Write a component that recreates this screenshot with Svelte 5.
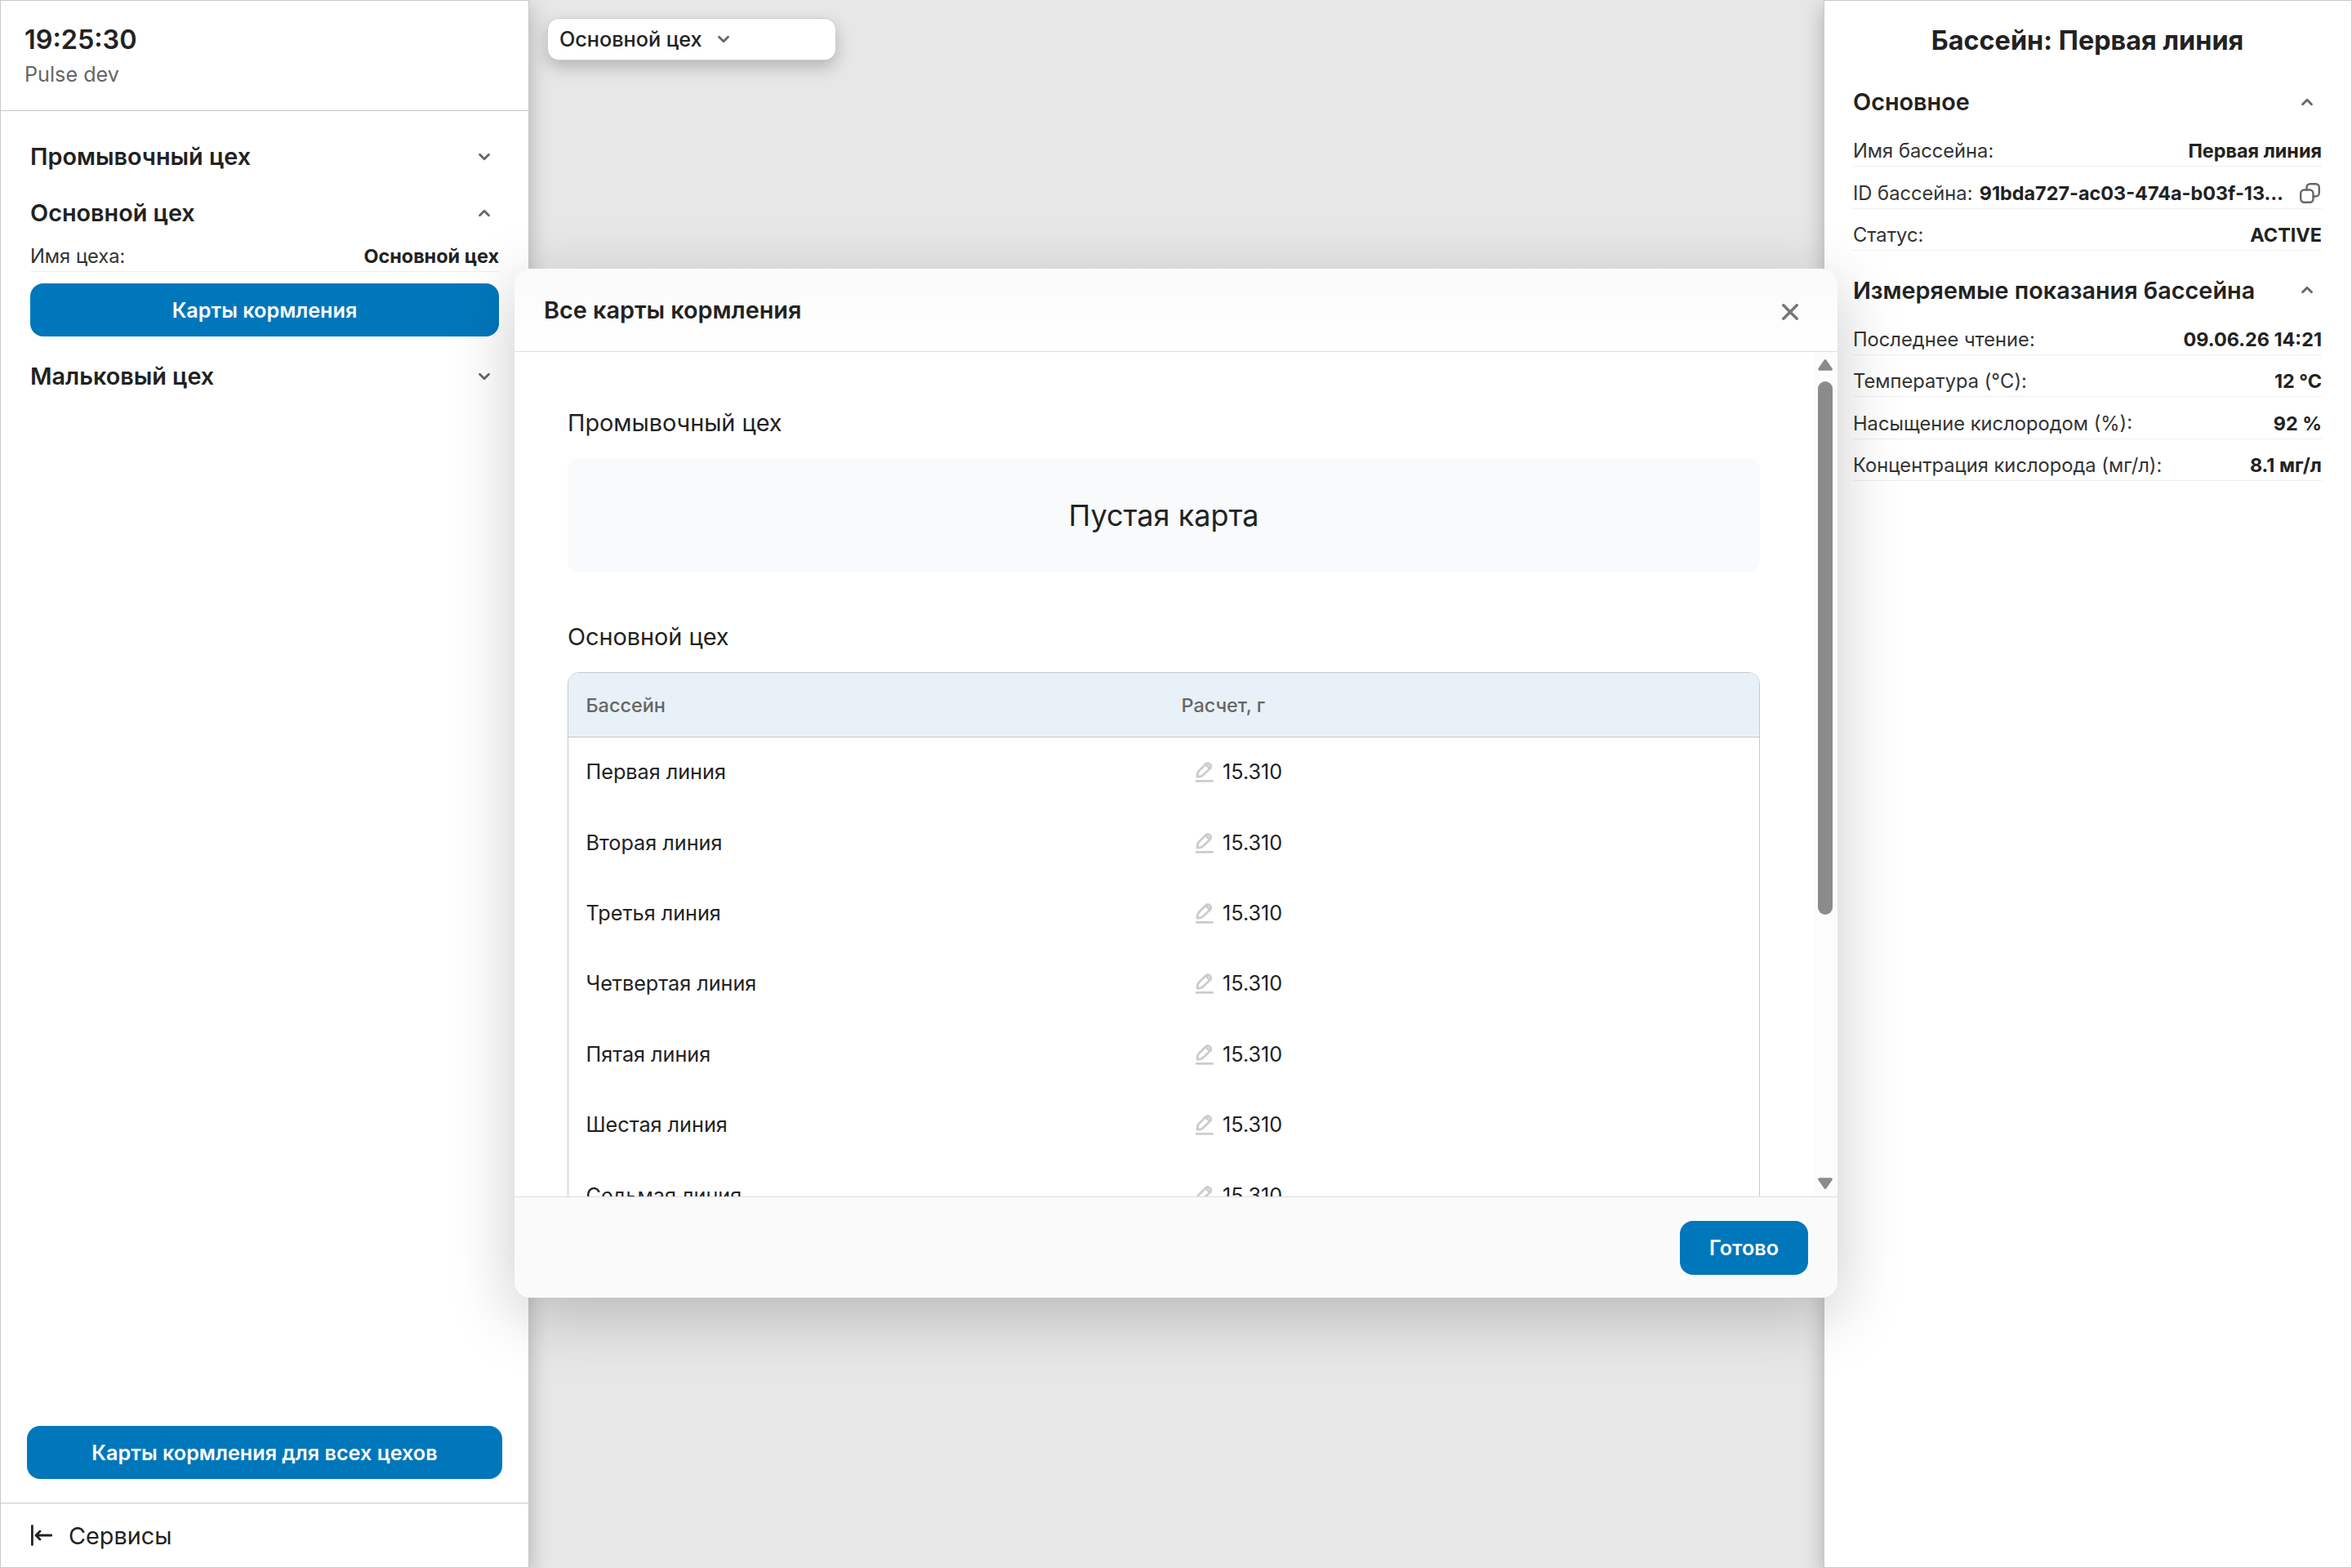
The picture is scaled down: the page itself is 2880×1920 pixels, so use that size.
<script lang="ts">
  type Pair = { label: string; value: string; copy?: boolean };

  const main: Pair[] = [
    { label: 'Имя бассейна:', value: 'Первая линия' },
    { label: 'ID бассейна:', value: '91bda727-ac03-474a-b03f-13…', copy: true },
    { label: 'Статус:', value: 'ACTIVE' },
  ];

  const readings: Pair[] = [
    { label: 'Последнее чтение:', value: '09.06.26 14:21' },
    { label: 'Температура (°C):', value: '12 °C' },
    { label: 'Насыщение кислородом (%):', value: '92 %' },
    { label: 'Концентрация кислорода (мг/л):', value: '8.1 мг/л' },
  ];

  const pools = ['Первая', 'Вторая', 'Третья', 'Четвертая', 'Пятая', 'Шестая', 'Седьмая'].map(
    (name) => ({ name: `${name} линия`, amount: '15.310' }),
  );
</script>

{#snippet chevron(up: boolean)}
  <svg class="chevron" class:up viewBox="0 0 16 10" width="16" height="10" aria-hidden="true">
    <path d="M2.5 2.2 8 7.7l5.5-5.5" />
  </svg>
{/snippet}

{#snippet group(title: string, open: boolean)}
  <button class="group" aria-expanded={open}>
    <span>{title}</span>
    {@render chevron(open)}
  </button>
{/snippet}

{#snippet pair(item: Pair)}
  <div class="pair">
    <span class="label">{item.label}</span>
    <span class="value">{item.value}</span>
    {#if item.copy}
      <button class="copy" aria-label="Скопировать">
        <svg viewBox="0 0 25 25" width="25" height="25" aria-hidden="true">
          <rect x="1.2" y="8.5" width="15.3" height="15.3" rx="4.2" />
          <path d="M8.5 8.5V5.4a4.2 4.2 0 0 1 4.2-4.2h6.9a4.2 4.2 0 0 1 4.2 4.2v6.9a4.2 4.2 0 0 1-4.2 4.2h-3.1" />
        </svg>
      </button>
    {/if}
  </div>
{/snippet}

<div class="app">
  <aside class="side left">
    <header class="clock">
      <div class="time">19:25:30</div>
      <div class="stand">Pulse dev</div>
    </header>
    <div class="shops">
      {@render group('Промывочный цех', false)}
      {@render group('Основной цех', true)}
      {@render pair({ label: 'Имя цеха:', value: 'Основной цех' })}
      <button class="primary wide">Карты кормления</button>
      {@render group('Мальковый цех', false)}
    </div>
    <button class="primary all">Карты кормления для всех цехов</button>
    <footer class="services">
      <svg viewBox="0 0 26 26" width="26" height="26" aria-hidden="true">
        <path d="M1.4 1.4v23.2M25 13H7M11 8l-5 5 5 5" />
      </svg>
      <span>Сервисы</span>
    </footer>
  </aside>

  <main class="stage">
    <button class="select">
      <span>Основной цех</span>
      {@render chevron(false)}
    </button>
  </main>

  <aside class="side right">
    <h1>Бассейн: Первая линия</h1>
    {@render group('Основное', true)}
    {#each main as item}
      {@render pair(item)}
    {/each}
    {@render group('Измеряемые показания бассейна', true)}
    {#each readings as item}
      {@render pair(item)}
    {/each}
  </aside>

  <div class="overlay">
    <div class="modal" role="dialog" aria-label="Все карты кормления">
      <header class="modal-head">
        <h2>Все карты кормления</h2>
        <button class="close" aria-label="Закрыть">
          <svg viewBox="0 0 20 20" width="20" height="20" aria-hidden="true">
            <path d="M1.8 1.8l16.4 16.4M18.2 1.8 1.8 18.2" />
          </svg>
        </button>
      </header>
      <div class="modal-body">
        <div class="cards">
          <h3>Промывочный цех</h3>
          <div class="empty">Пустая карта</div>
          <h3>Основной цех</h3>
          <div class="table">
            <div class="tr th">
              <span>Бассейн</span>
              <span>Расчет, г</span>
            </div>
            {#each pools as pool}
              <div class="tr">
                <span>{pool.name}</span>
                <span class="amount">
                  <svg viewBox="0 0 22 26" width="22" height="26" aria-hidden="true">
                    <path d="M2 19.2c0-4 .6-5.7 2-7.1l8.5-8.5c3-3 8.5 2 5.4 5.2l-9 8.5c-1.6 1.5-3.3 1.9-6.9 1.9zM13 4.5l4.2 4.3" />
                    <path d="M1.2 24.4h19.6" />
                  </svg>
                  {pool.amount}
                </span>
              </div>
            {/each}
          </div>
        </div>
        <div class="scrollbar">
          <svg viewBox="0 0 18 14" width="18" height="14" aria-hidden="true">
            <path d="M9 2l7 10H2z" />
          </svg>
          <div class="track"><div class="thumb"></div></div>
          <svg viewBox="0 0 18 14" width="18" height="14" aria-hidden="true">
            <path d="M9 12 2 2h14z" />
          </svg>
        </div>
      </div>
      <footer class="modal-foot">
        <button class="primary done">Готово</button>
      </footer>
    </div>
  </div>
</div>

<style>
  :global(body) {
    background: #e7e7e7;
  }

  .app {
    position: relative;
    display: flex;
    width: 2880px;
    height: 1920px;
    overflow: hidden;
    font-family: Inter, sans-serif;
    font-size: 25.2px;
    color: #222;
    background: #e7e7e7;
  }

  .app * {
    box-sizing: border-box;
  }

  button {
    margin: 0;
    padding: 0;
    border: none;
    background: none;
    font: inherit;
    color: inherit;
    cursor: pointer;
  }

  h1,
  h2,
  h3 {
    margin: 0;
  }

  svg {
    flex: none;
    display: block;
    fill: none;
    stroke: currentColor;
    stroke-linecap: round;
    stroke-linejoin: round;
  }

  .side {
    flex: none;
    display: flex;
    flex-direction: column;
    width: 648px;
    border: 1px solid #c8c8c8;
    background: #fff;
    box-shadow: 0 8px 24px rgba(0, 0, 0, 0.25);
  }

  .clock {
    height: 135px;
    padding: 28px 29px 0;
    border-bottom: 1px solid #c8c8c8;
  }
  .time {
    font-size: 32.4px;
    line-height: 40px;
    font-weight: 600;
  }
  .stand {
    margin-top: 6px;
    line-height: 32px;
    color: #666;
  }

  .shops {
    flex: 1;
    display: flex;
    flex-direction: column;
    padding: 21px 36px 0;
  }

  .group {
    flex: none;
    display: flex;
    align-items: center;
    justify-content: space-between;
    height: 69px;
    padding-right: 10px;
    font-size: 28.8px;
    font-weight: 600;
    text-align: left;
  }

  .chevron {
    color: #666;
    stroke-width: 2.8;
  }
  .chevron.up {
    transform: rotate(180deg);
  }

  .pair {
    flex: none;
    display: flex;
    align-items: center;
    height: 38px;
    border-bottom: 1px solid #efefef;
    font-size: 23.7px;
    white-space: nowrap;
  }
  .label {
    color: #333;
  }
  .value {
    flex: 1;
    margin-left: 6px;
    font-size: 23.4px;
    font-weight: 700;
    text-align: right;
  }
  .copy {
    margin-left: 20px;
    padding-right: 2px;
    color: #666;
  }
  .copy svg {
    stroke-width: 2.4;
  }

  .primary {
    border-radius: 16px;
    background: #0077bb;
    color: #fff;
    font-weight: 600;
  }
  .wide {
    flex: none;
    height: 65px;
    margin: 14px 0;
  }
  .all {
    flex: none;
    height: 65px;
    margin: 0 32px 29px;
  }

  .services {
    display: flex;
    align-items: center;
    gap: 20px;
    height: 79px;
    padding-left: 37px;
    border-top: 1px solid #c8c8c8;
    font-size: 28.8px;
  }
  .services svg {
    stroke-width: 2.8;
  }

  .stage {
    flex: 1;
    padding: 22px;
  }
  .select {
    display: flex;
    align-items: center;
    gap: 18px;
    width: 354px;
    height: 52px;
    padding: 0 14px;
    border: 1px solid #ccc;
    border-radius: 14px;
    background: #fff;
    font-weight: 450;
    box-shadow: 0 8px 20px rgba(0, 0, 0, 0.22);
  }

  .right {
    width: 647px;
    padding: 27px 36px 0 35px;
  }
  .right h1 {
    margin-bottom: 18px;
    font-size: 32.4px;
    line-height: 44px;
    font-weight: 700;
    text-align: center;
  }
  .right .group {
    margin-bottom: 7px;
  }
  .right .pair {
    margin-bottom: 13.5px;
  }

  .overlay {
    position: absolute;
    inset: 0 0 2px;
    display: flex;
    align-items: center;
    justify-content: center;
  }
  .modal {
    display: flex;
    flex-direction: column;
    width: 1620px;
    height: 1260px;
    border-radius: 20px;
    overflow: hidden;
    background: #fff;
    box-shadow: 0 20px 80px rgba(0, 0, 0, 0.21);
  }
  .modal-head {
    display: flex;
    align-items: center;
    justify-content: space-between;
    height: 102px;
    padding: 0 48px 0 36px;
    border-bottom: 1px solid #dedede;
    background: linear-gradient(#fafafa, #fff);
  }
  .modal-head h2 {
    font-size: 28.8px;
    font-weight: 600;
  }
  .close {
    margin-top: 5px;
    color: #777;
  }
  .close svg {
    stroke-width: 3.5;
  }

  .modal-body {
    display: flex;
    height: 1034px;
    overflow: hidden;
  }
  .cards {
    flex: 1;
    padding: 66px 65px 0;
  }
  .cards h3 {
    font-size: 28.8px;
    line-height: 42px;
    font-weight: 400;
  }
  .empty {
    display: flex;
    align-items: center;
    justify-content: center;
    height: 140px;
    margin: 22px 0 58px;
    border-radius: 14px;
    background: #f8fafc;
    font-size: 36px;
  }
  .table {
    margin-top: 22px;
    border: 1px solid #c8c8c8;
    border-radius: 14px;
    overflow: hidden;
  }
  .tr {
    display: grid;
    grid-template-columns: 1fr 1fr;
    align-items: center;
    height: 86.4px;
    padding-bottom: 2px;
  }
  .tr > span {
    padding-left: 21.5px;
  }
  .th {
    height: 79px;
    padding-bottom: 0;
    border-bottom: 1px solid #c8c8c8;
    background: #e8f1f7;
    font-size: 23.4px;
    font-weight: 500;
    color: #666;
  }
  .tr > .amount {
    display: flex;
    align-items: center;
    gap: 11px;
    padding-left: 39px;
  }
  .amount svg {
    color: #ccc;
    stroke-width: 2.8;
  }

  .scrollbar {
    display: flex;
    flex-direction: column;
    align-items: center;
    width: 30px;
    padding: 9px 0;
    background: #fcfcfc;
  }
  .scrollbar svg {
    color: #8b8b8b;
    fill: currentColor;
    stroke-width: 3.6;
  }
  .track {
    flex: 1;
    padding-top: 13px;
  }
  .thumb {
    width: 18px;
    height: 653px;
    border-radius: 9px;
    background: #8b8b8b;
  }

  .modal-foot {
    display: flex;
    align-items: flex-start;
    justify-content: flex-end;
    height: 124px;
    padding: 29px 36px 0;
    border-top: 1px solid #dedede;
    background: #fafafa;
  }
  .done {
    width: 157px;
    height: 66px;
  }
</style>
